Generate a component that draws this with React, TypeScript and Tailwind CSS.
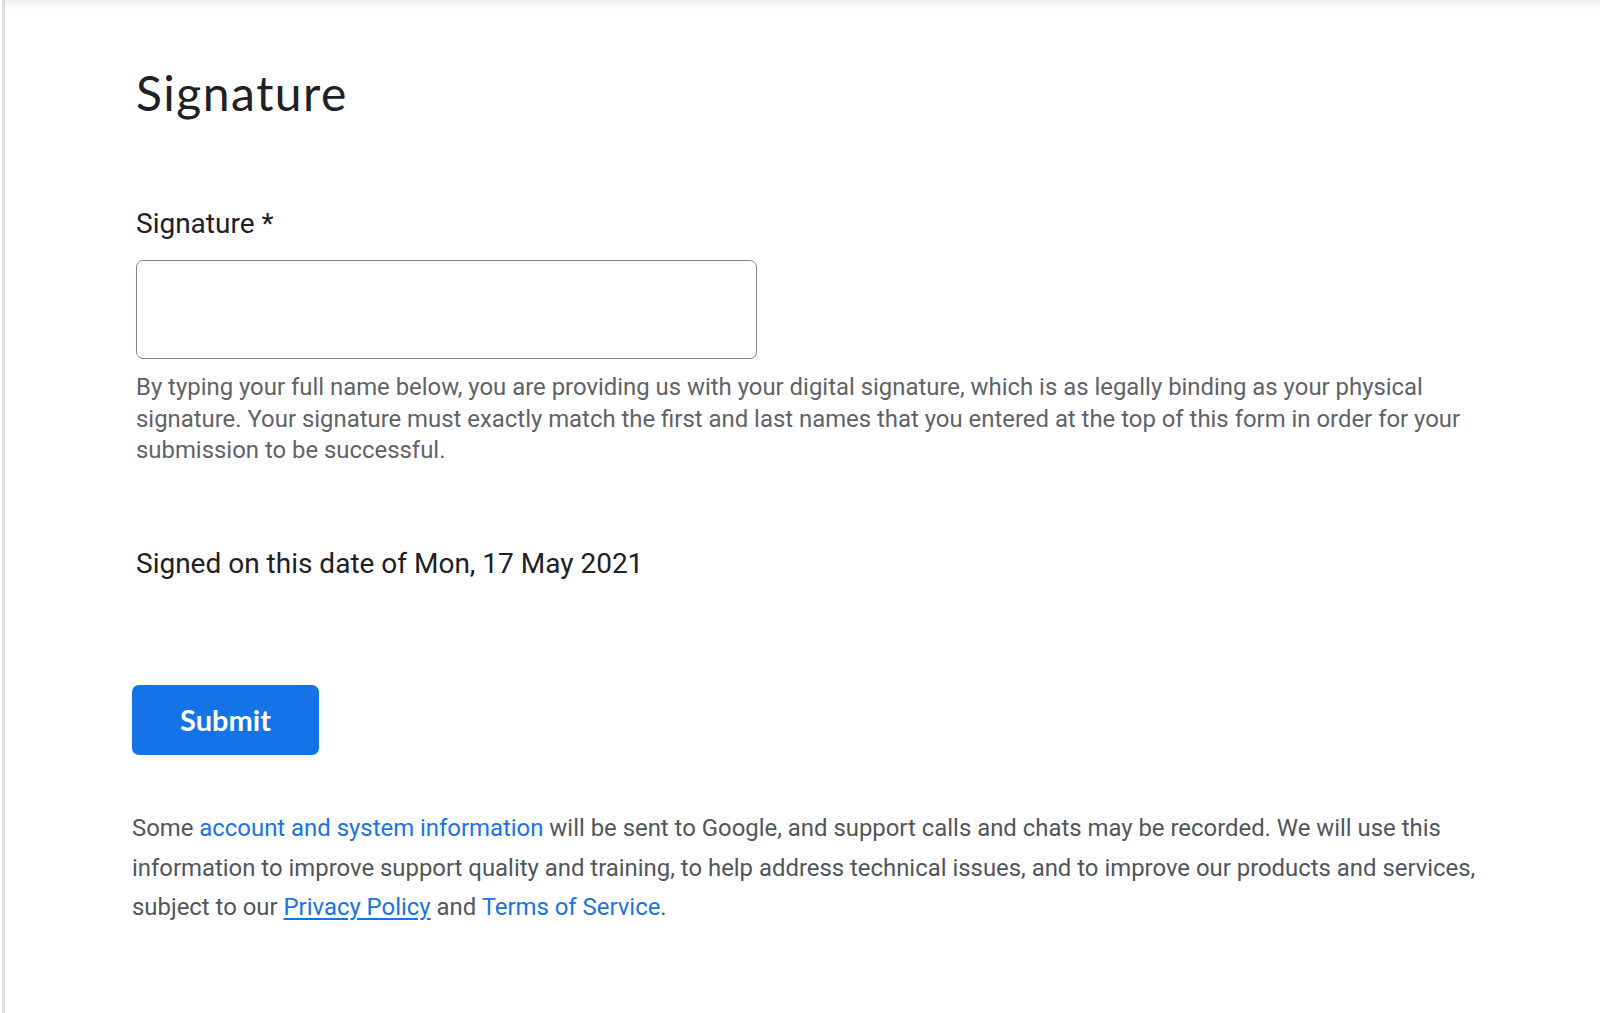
export default function App() {
  return (
    <div className="min-h-screen bg-white pl-[2px]">
      <div className="min-h-[1013px] border-l-[3px] border-[#dadce0]">
        <div className="h-[10px] bg-gradient-to-b from-[#f1f1f1] to-white" />
        <div className="pl-[131px] font-['Roboto',sans-serif]">
          <div className="max-w-[1380px]">
            <h1 className="mt-[55px] text-[48px] leading-[56px] tracking-[1.5px] text-[#202124] font-['Lato',sans-serif]">
              Signature
            </h1>
            <label className="block mt-[85px] text-[28px] leading-[36px] text-[#202124]">
              Signature *
            </label>
            <div className="mt-[18px] w-[621px] h-[99px] rounded-[7px] border-[1.5px] border-[#80868b]" />
            <p className="mt-[13px] text-[23.9px] leading-[31.6px] text-[#5f6368]">
              By typing your full name below, you are providing us with your digital signature, which is as legally binding as your physical signature. Your signature must exactly match the first and last names that you entered at the top of this form in order for your submission to be successful.
            </p>
            <p className="mt-[79px] text-[28px] leading-[36px] text-[#202124]">
              Signed on this date of Mon, 17 May 2021
            </p>
            <button
              type="button"
              className="block -ml-[4px] mt-[103px] w-[187px] h-[70px] rounded-[7px] bg-[#1473e6] text-white text-[29px] font-bold font-['Lato',sans-serif]"
            >
              Submit
            </button>
            <p className="-ml-[4px] mt-[54px] text-[23.9px] leading-[39.8px] text-[#51565b]">
              Some <a className="text-[#1a73e8]">account and system information</a> will be sent to Google, and support calls and chats may be recorded. We will use this information to improve support quality and training, to help address technical issues, and to improve our products and services, subject to our{' '}
              <a className="text-[#1a73e8] underline underline-offset-[3px]">Privacy Policy</a> and{' '}
              <a className="text-[#1a73e8]">Terms of Service</a>.
            </p>
          </div>
        </div>
      </div>
    </div>
  );
}
